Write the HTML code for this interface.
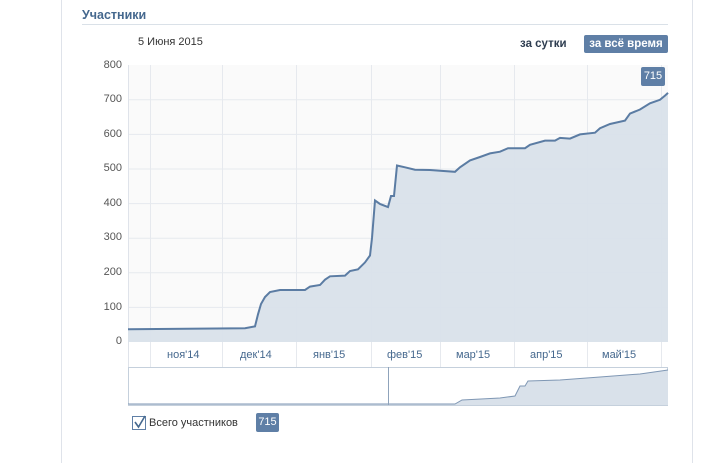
<!DOCTYPE html>
<html><head><meta charset="utf-8"><style>
body{margin:0;width:722px;height:463px;background:#fff;font-family:"Liberation Sans",sans-serif;position:relative;overflow:hidden}
.t{position:absolute;white-space:nowrap}
</style></head><body>
<div style="position:absolute;left:61px;top:0;width:1px;height:463px;background:#dfe3ea"></div>
<div style="position:absolute;left:692px;top:0;width:1px;height:463px;background:#dfe3ea"></div>
<div class="t" style="left:82px;top:8px;font-size:12.5px;font-weight:bold;color:#45688e">Участники</div>
<div style="position:absolute;left:82px;top:24px;width:586px;height:1px;background:#dae1e8"></div>
<div class="t" style="left:138px;top:36px;font-size:11px;color:#333">5 Июня 2015</div>
<div class="t" style="left:520px;top:38px;font-size:11.5px;font-weight:bold;color:#2e3d50">за сутки</div>
<div class="t" style="left:584px;top:35px;width:84px;height:18px;background:#5f7fa6;border-radius:2px;color:#fff;font-size:11.5px;font-weight:bold;text-align:center;line-height:18px">за всё время</div>
<svg width="722" height="463" style="position:absolute;left:0;top:0">
<rect x="128" y="65" width="540" height="277" fill="#fafafa"/>
<g stroke="#e6e9ee" stroke-width="1">
<line x1="128" y1="99.8" x2="668" y2="99.8"/><line x1="128" y1="134.4" x2="668" y2="134.4"/><line x1="128" y1="169" x2="668" y2="169"/><line x1="128" y1="203.6" x2="668" y2="203.6"/><line x1="128" y1="238.2" x2="668" y2="238.2"/><line x1="128" y1="272.8" x2="668" y2="272.8"/><line x1="128" y1="307.4" x2="668" y2="307.4"/>
<line x1="150.5" y1="65" x2="150.5" y2="367"/><line x1="222.5" y1="65" x2="222.5" y2="367"/><line x1="296.5" y1="65" x2="296.5" y2="367"/><line x1="371.5" y1="65" x2="371.5" y2="367"/><line x1="440.5" y1="65" x2="440.5" y2="367"/><line x1="514.5" y1="65" x2="514.5" y2="367"/><line x1="587.5" y1="65" x2="587.5" y2="367"/><line x1="661.5" y1="65" x2="661.5" y2="367"/>
</g>
<line x1="128.5" y1="65" x2="128.5" y2="367" stroke="#dfe3ea"/>
<path d="M128,329.2 L245,328.2 L255,326.4 L258,314.3 L261,304 L265,297 L270,292 L280,290 L305,290 L310,286.6 L320,285 L325,279.7 L330,276.3 L345,275.6 L350,271 L358,269.3 L365,262.4 L370,255.5 L372,238 L375,200.5 L380,204 L388,207 L391,196 L394,196 L397,165.5 L405,167.3 L415,169.7 L430,170 L440,170.7 L455,171.8 L460,167.3 L470,160.4 L480,157 L490,153.4 L500,151.7 L508,148.2 L525,148.2 L530,144.8 L545,140.6 L555,140.6 L560,137.9 L570,138.6 L580,134.4 L595,132.7 L600,128.2 L610,124 L625,120.6 L630,113.6 L640,109.5 L650,103.3 L660,99.8 L665,95.6 L668,92.9 L668,342 L128,342 Z" fill="#d9e1ea" fill-opacity="0.95" stroke="none"/>
<path d="M128,329.2 L245,328.2 L255,326.4 L258,314.3 L261,304 L265,297 L270,292 L280,290 L305,290 L310,286.6 L320,285 L325,279.7 L330,276.3 L345,275.6 L350,271 L358,269.3 L365,262.4 L370,255.5 L372,238 L375,200.5 L380,204 L388,207 L391,196 L394,196 L397,165.5 L405,167.3 L415,169.7 L430,170 L440,170.7 L455,171.8 L460,167.3 L470,160.4 L480,157 L490,153.4 L500,151.7 L508,148.2 L525,148.2 L530,144.8 L545,140.6 L555,140.6 L560,137.9 L570,138.6 L580,134.4 L595,132.7 L600,128.2 L610,124 L625,120.6 L630,113.6 L640,109.5 L650,103.3 L660,99.8 L665,95.6 L668,92.9" fill="none" stroke="#5b7ca3" stroke-width="2"/>
<rect x="128.5" y="367.5" width="539" height="38" fill="#fff" stroke="#c5d0dc"/>
<path d="M128,404 L455,404 L462,400 L500,398 L515,396 L520,386 L525,386 L528,381 L560,380 L600,377 L640,374 L668,370 L668,405 L128,405 Z" fill="#d9e1ea"/>
<path d="M128,404 L455,404 L462,400 L500,398 L515,396 L520,386 L525,386 L528,381 L560,380 L600,377 L640,374 L668,370" fill="none" stroke="#7f97b4" stroke-width="1"/>
<line x1="388.5" y1="367" x2="388.5" y2="405" stroke="#8fa3bb"/>
<rect x="132.5" y="416.5" width="13" height="13" fill="#fff" stroke="#5f7fa6"/>
<path d="M135,422 L138.5,427 L145,416" fill="none" stroke="#45688e" stroke-width="1.6"/>
</svg>
<div class="t" style="left:102px;top:59px;font-size:11px;color:#555;width:20px;text-align:right">800</div>
<div class="t" style="left:102px;top:93px;font-size:11px;color:#555;width:20px;text-align:right">700</div>
<div class="t" style="left:102px;top:128px;font-size:11px;color:#555;width:20px;text-align:right">600</div>
<div class="t" style="left:102px;top:162px;font-size:11px;color:#555;width:20px;text-align:right">500</div>
<div class="t" style="left:102px;top:197px;font-size:11px;color:#555;width:20px;text-align:right">400</div>
<div class="t" style="left:102px;top:231px;font-size:11px;color:#555;width:20px;text-align:right">300</div>
<div class="t" style="left:102px;top:266px;font-size:11px;color:#555;width:20px;text-align:right">200</div>
<div class="t" style="left:102px;top:301px;font-size:11px;color:#555;width:20px;text-align:right">100</div>
<div class="t" style="left:102px;top:335px;font-size:11px;color:#555;width:20px;text-align:right">0</div>
<div class="t" style="left:167px;top:349px;font-size:11px;color:#45688e">ноя'14</div>
<div class="t" style="left:240px;top:349px;font-size:11px;color:#45688e">дек'14</div>
<div class="t" style="left:313px;top:349px;font-size:11px;color:#45688e">янв'15</div>
<div class="t" style="left:387px;top:349px;font-size:11px;color:#45688e">фев'15</div>
<div class="t" style="left:456px;top:349px;font-size:11px;color:#45688e">мар'15</div>
<div class="t" style="left:530px;top:349px;font-size:11px;color:#45688e">апр'15</div>
<div class="t" style="left:602px;top:349px;font-size:11px;color:#45688e">май'15</div>
<div class="t" style="left:641px;top:67px;width:24px;height:19px;background:#5f7fa6;border-radius:2px;color:#fff;font-size:11px;text-align:center;line-height:19px">715</div>
<div class="t" style="left:149px;top:417px;font-size:11px;color:#333">Всего участников</div>
<div class="t" style="left:256px;top:413px;width:23px;height:19px;background:#5f7fa6;border-radius:2px;color:#fff;font-size:11px;text-align:center;line-height:19px">715</div>
</body></html>
